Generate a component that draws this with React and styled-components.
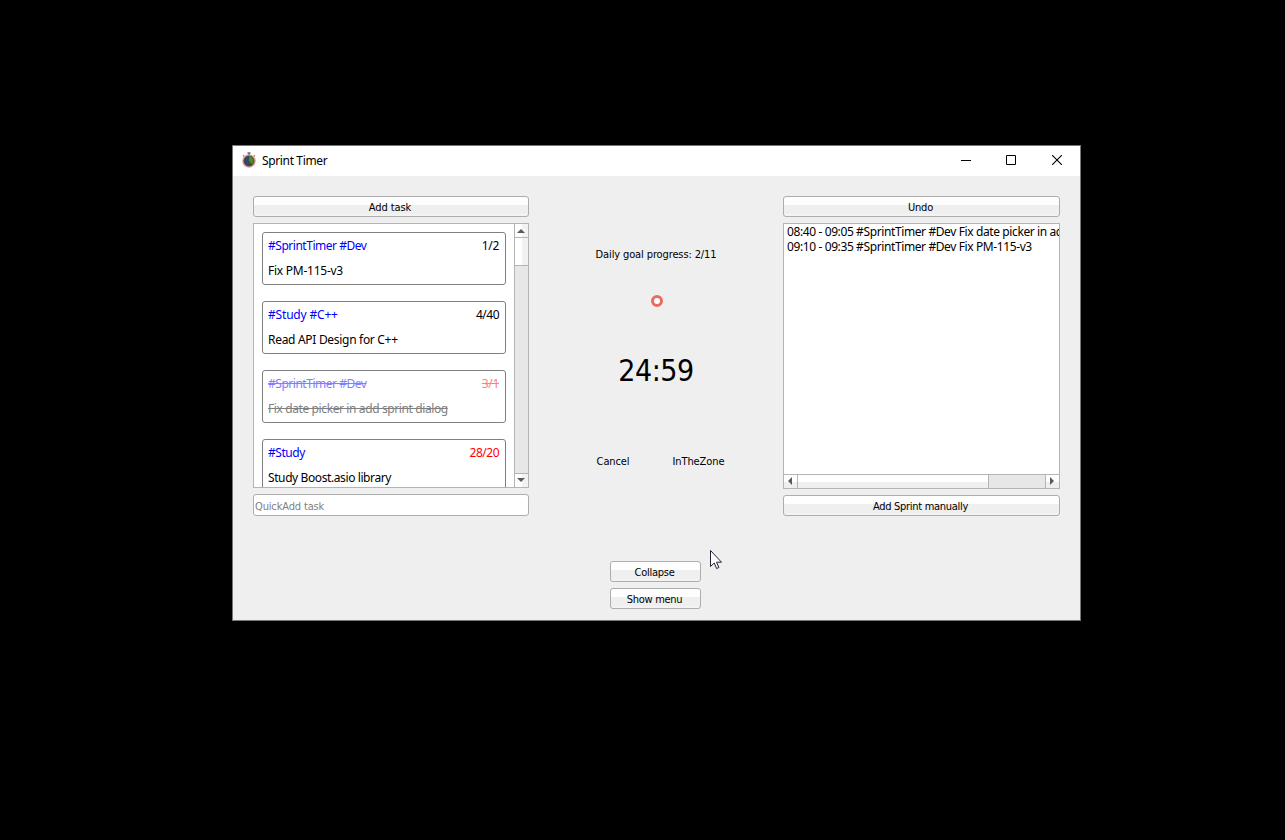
import React from "react";
import styled, { createGlobalStyle, css } from "styled-components";

const GlobalStyle = createGlobalStyle`
  * { box-sizing: border-box; }
  html, body { margin: 0; background: #000; }
`;

const segoe = css`
  font-family: "Noto Sans", "Open Sans", sans-serif;
  font-size: 12px;
  line-height: 16px;
`;
const tahoma = css`
  font-family: "DejaVu Sans Condensed", "DejaVu Sans", sans-serif;
  font-stretch: condensed;
  font-size: 11px;
  line-height: 14px;
`;

const Desktop = styled.div`
  width: 1285px;
  height: 840px;
  padding: 145px 0 0 232px;
  background: #000;
  overflow: hidden;
  position: relative;
`;
const Window = styled.main`
  width: 849px;
  height: 476px;
  display: flex;
  flex-direction: column;
  background: #efefef;
  border: 1px solid #777;
  color: #000;
`;
const TitleBar = styled.header`
  height: 30px;
  flex: none;
  display: flex;
  align-items: center;
  background: #fff;
  padding-left: 8px;
`;
const AppIcon = styled.svg`
  display: block;
  margin-bottom: 2px;
`;
const Title = styled.h1`
  ${segoe}
  font-weight: 400;
  margin: 0 auto 0 5px;
  letter-spacing: -0.36px;
`;
const CaptionButton = styled.span`
  width: 46px;
  height: 30px;
  padding: 0 0 2px ${(p) => p.$inset || 0}px;
  display: grid;
  place-items: center;
  svg { display: block; }
`;
const Columns = styled.div`
  display: grid;
  grid-template-columns: 276px 254px 277px;
  padding: 20px 20px 0;
  height: 385px;
  flex: none;
`;
const Column = styled.section`
  display: flex;
  flex-direction: column;
  gap: 6px;
  min-width: 0;
`;
const Button = styled.button`
  ${tahoma}
  flex: none;
  width: ${(p) => p.$width || "100%"};
  height: 21px;
  padding: 2px 2px 0 0;
  border: 1px solid #adadad;
  border-radius: 3px;
  background: linear-gradient(#fefefe 0 8px, #efefef 8px 17px, #f3f3f3 17px);
  color: #000;
  letter-spacing: ${(p) => p.$track || 0}px;
`;
const Frame = styled.div`
  flex: none;
  height: ${(p) => p.$height}px;
  display: flex;
  flex-direction: ${(p) => p.$direction || "row"};
  background: #fff;
  border: 1px solid #b4b4b4;
  overflow: hidden;
`;
const Cards = styled.div`
  flex: 1;
  min-width: 0;
  display: flex;
  flex-direction: column;
  gap: 16px;
  padding: 8px 8px 0;
  overflow: hidden;
`;
const Card = styled.article`
  ${segoe}
  flex: none;
  height: 53px;
  padding: 5px 6px 0 5px;
  border: 1px solid #808080;
  border-radius: 3px;
  display: flex;
  flex-direction: column;
  gap: 9px;
`;
const CardHead = styled.div`
  display: flex;
  justify-content: space-between;
`;
const Text = styled.span`
  color: ${(p) => p.$color || "#000"};
  letter-spacing: ${(p) => p.$track || 0}px;
  text-decoration: ${(p) => (p.$struck ? "line-through" : "none")};
  white-space: pre;
`;
const VScroll = styled.div`
  width: 14px;
  flex: none;
  display: flex;
  flex-direction: column;
  border-left: 1px solid #b4b4b4;
  background: #e7e7e7;
`;
const HScroll = styled.div`
  height: 14px;
  flex: none;
  display: flex;
  border-top: 1px solid #b4b4b4;
  background: #e7e7e7;
`;
const VPart = styled.div`
  height: ${(p) => p.$size}px;
  padding: 0 1px ${(p) => (p.$end ? 1 : 0)}px 0;
  display: grid;
  place-items: center;
  background: linear-gradient(90deg, #fff 0 7px, #f2f2f2 7px);
  border: 0 solid #b4b4b4;
  border-bottom-width: ${(p) => (p.$end ? 0 : 1)}px;
  border-top-width: ${(p) => (p.$end ? 1 : 0)}px;
  margin-top: ${(p) => (p.$end ? "auto" : 0)};
`;
const HPart = styled.div`
  width: ${(p) => p.$size}px;
  padding: 0 1px 1px 0;
  display: grid;
  place-items: center;
  background: linear-gradient(#fff 0 7px, #efefef 7px);
  border: 0 solid #b4b4b4;
  border-right-width: ${(p) => (p.$end ? 0 : 1)}px;
  border-left-width: ${(p) => (p.$end ? 1 : 0)}px;
  margin-left: ${(p) => (p.$end ? "auto" : 0)};
`;
const ArrowGlyph = styled.svg`
  display: block;
`;
const QuickAdd = styled.input`
  ${tahoma}
  flex: none;
  width: 100%;
  height: 22px;
  padding: 3px 2px 0 1px;
  border: 1px solid #adadad;
  border-radius: 3px;
  background: #fff;
  outline: none;
  letter-spacing: -0.15px;
  &::placeholder { color: #808080; opacity: 1; }
`;
const Log = styled.div`
  ${segoe}
  line-height: 15px;
  flex: 1;
  min-height: 0;
  padding: 0 0 0 3px;
  display: flex;
  flex-direction: column;
  overflow: hidden;
`;
const Center = styled.section`
  ${tahoma}
  display: flex;
  flex-direction: column;
  align-items: center;
  padding: 52px 0 0;
`;
const Ring = styled.div`
  width: 12px;
  height: 12px;
  margin: 33px 0 0 2px;
  border: 3px solid #ed6b5e;
  border-radius: 50%;
  background: #fff;
`;
const Clock = styled.div`
  font-family: "DejaVu Sans Condensed", "DejaVu Sans", sans-serif;
  font-stretch: condensed;
  font-size: 30px;
  line-height: 40px;
  margin-top: 44px;
  letter-spacing: -0.5px;
`;
const Actions = styled.div`
  display: flex;
  gap: 43px;
  margin: 64px 0 0 9px;
`;
const Footer = styled.footer`
  display: flex;
  flex-direction: column;
  align-items: center;
  gap: 6px;
  padding-right: 2px;
`;
const Pointer = styled.svg`
  position: absolute;
  left: 710px;
  top: 550px;
`;

const Arrow = ({ d, w, h }) => (
  <ArrowGlyph width={w} height={h} viewBox={`0 0 ${w} ${h}`}>
    <path d={d} fill="#5a5a5a" />
  </ArrowGlyph>
);

const tasks = [
  { tags: "#SprintTimer #Dev", name: "Fix PM-115-v3", count: "1/2", track: [-0.47, -0.3, -0.25] },
  { tags: "#Study #C++", name: "Read API Design for C++", count: "4/40", track: [-0.18, -0.5, -0.3] },
  { tags: "#SprintTimer #Dev", name: "Fix date picker in add sprint dialog", count: "3/1", done: true, track: [-0.47, -0.3, -0.39] },
  { tags: "#Study", name: "Study Boost.asio library", count: "28/20", over: true, track: [-0.45, -0.5, -0.4] },
];

const countColor = (task) => (task.done ? "#ff8080" : task.over ? "#ff0000" : "#000");

export default function App() {
  return (
    <Desktop>
      <GlobalStyle />
      <Window>
        <TitleBar>
          <AppIcon width="16" height="16" viewBox="0 0 16 16">
            <path d="M6.5 1h3M8 1v2" stroke="#5b6f7d" strokeWidth="1.4" />
            <path d="M2 3.2l1.4 1.2M14 3.2l-1.4 1.2" stroke="#8a8f98" strokeWidth="1.3" />
            <circle cx="8" cy="9" r="6.1" fill="#34495e" stroke="#e59a90" strokeWidth="1.3" />
            <path d="M8 9V4.3a4.8 4.8 0 0 1 3.2 8.2z" fill="#4f8f18" />
          </AppIcon>
          <Title>Sprint Timer</Title>
          <CaptionButton $inset={2}><svg width="10" height="10"><path d="M0 5.5h10" stroke="#000" /></svg></CaptionButton>
          <CaptionButton><svg width="10" height="10"><path d="M.5.5h9v9h-9z" fill="none" stroke="#000" /></svg></CaptionButton>
          <CaptionButton><svg width="10" height="10"><path d="M0 0l10 10M10 0L0 10" stroke="#000" strokeWidth="1.1" /></svg></CaptionButton>
        </TitleBar>
        <Columns>
          <Column>
            <Button $track={-0.1}>Add task</Button>
            <Frame $height={265}>
              <Cards>
                {tasks.map((task, i) => (
                  <Card key={i}>
                    <CardHead>
                      <Text $struck={task.done} $color={task.done ? "#8080ff" : "#0000ff"} $track={task.track[0]}>{task.tags}</Text>
                      <Text $struck={task.done} $color={countColor(task)} $track={task.track[1]}>{task.count}</Text>
                    </CardHead>
                    <div>
                      <Text $struck={task.done} $color={task.done ? "#808080" : "#000"} $track={task.track[2]}>{task.name}</Text>
                    </div>
                  </Card>
                ))}
              </Cards>
              <VScroll>
                <VPart $size={14}><Arrow w={8} h={4} d="M0 4L4 0l4 4z" /></VPart>
                <VPart $size={28} />
                <VPart $size={14} $end><Arrow w={8} h={4} d="M0 0l4 4 4-4z" /></VPart>
              </VScroll>
            </Frame>
            <QuickAdd placeholder="QuickAdd task" />
          </Column>
          <Center>
            <Text $track={-0.12}>Daily goal progress: 2/11</Text>
            <Ring />
            <Clock>24:59</Clock>
            <Actions>
              <Text $track={-0.1}>Cancel</Text>
              <Text $track={-0.1}>InTheZone</Text>
            </Actions>
          </Center>
          <Column>
            <Button $track={-0.2}>Undo</Button>
            <Frame $height={266} $direction="column">
              <Log>
                <Text $track={-0.39}>08:40 - 09:05 #SprintTimer #Dev Fix date picker in add sprint dialog</Text>
                <Text $track={-0.39}>09:10 - 09:35 #SprintTimer #Dev Fix PM-115-v3</Text>
              </Log>
              <HScroll>
                <HPart $size={14}><Arrow w={4} h={8} d="M4 0L0 4l4 4z" /></HPart>
                <HPart $size={191} />
                <HPart $size={14} $end><Arrow w={4} h={8} d="M0 0l4 4-4 4z" /></HPart>
              </HScroll>
            </Frame>
            <Button $track={-0.3}>Add Sprint manually</Button>
          </Column>
        </Columns>
        <Footer>
          <Button $width="91px" $track={-0.25}>Collapse</Button>
          <Button $width="91px" $track={-0.3}>Show menu</Button>
        </Footer>
      </Window>
      <Pointer width="13" height="20" viewBox="0 0 13 20">
        <path d="M.5.5v16l3.7-3.5 2.4 5.5 2.3-1-2.4-5.3h5z" fill="#fff" stroke="#223" />
      </Pointer>
    </Desktop>
  );
}
